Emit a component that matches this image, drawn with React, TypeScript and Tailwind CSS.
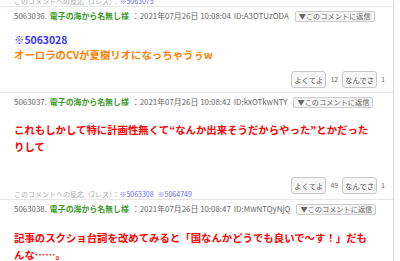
import React from "react";

type Comment = {
  no: string;
  name: string;
  date: string;
  id: string;
  lines: { text: string; color: string }[];
  bodyTop: string;
  leading: string;
  voteTop?: string;
  good?: number;
  bad?: number;
  replies?: string[];
};

const comments: Comment[] = [
  {
    no: "5063036.",
    name: "電子の海から名無し様",
    date: "：2021年07月26日 10:08:04",
    id: "ID:A3OTUzODA",
    lines: [
      { text: "※5063028", color: "text-[#3333ff]" },
      { text: "オーロラのCVが夏樹リオになっちゃうぅw", color: "text-[#ff8000]" },
    ],
    bodyTop: "mt-[8px]",
    leading: "leading-[15px]",
    voteTop: "mt-[9px]",
    good: 12,
    bad: 1,
  },
  {
    no: "5063037.",
    name: "電子の海から名無し様",
    date: "：2021年07月26日 10:08:42",
    id: "ID:kxOTkwNTY",
    lines: [
      {
        text: "これもしかして特に計画性無くて“なんか出来そうだからやった”とかだったりして",
        color: "text-[#ff0000]",
      },
    ],
    bodyTop: "mt-[11px]",
    leading: "leading-[17px]",
    voteTop: "mt-[22px]",
    good: 49,
    bad: 1,
    replies: ["※5063308", "※5064749"],
  },
  {
    no: "5063038.",
    name: "電子の海から名無し様",
    date: "：2021年07月26日 10:08:47",
    id: "ID:MwNTQyNjQ",
    lines: [
      {
        text: "記事のスクショ台詞を改めてみると「国なんかどうでも良いで〜す！」だもんな……。",
        color: "text-[#ff0000]",
      },
    ],
    bodyTop: "mt-[12px]",
    leading: "leading-[17px]",
  },
];

const VoteButton = ({ label, count }: { label: string; count: number }) => (
  <div className="flex items-center">
    <span className="h-[17px] px-[2px] flex items-center border border-[#c8c8c8] rounded-[3px] bg-[#f7f7f7] text-[#555] text-[7.4px]">
      {label}
    </span>
    <span className="ml-[4px] mr-[4px] text-[#666] text-[6.8px]">{count}</span>
  </div>
);

const CommentItem = ({ c }: { c: Comment }) => (
  <div className="border-t border-[#e6e6e6] pl-[14px] pr-[4px]">
    <div className="flex items-center h-[16px] mt-[1px] text-[7.9px] text-[#666] whitespace-nowrap">
      <span>{c.no}</span>
      <span className="ml-[3px] text-[#3a9a2a] font-bold">{c.name}</span>
      <span className="ml-[3px]">{c.date}</span>
      <span className="ml-[3px]">{c.id}</span>
      <span className="ml-[6px] h-[11px] px-[3px] flex items-center border border-[#ccc] rounded-[2px] bg-[#f5f5f5] text-[#666] text-[7.2px]">
        ▼このコメントに返信
      </span>
    </div>
    <div className={`${c.bodyTop} ${c.leading} pr-[17px] text-[10.4px] font-bold`}>
      {c.lines.map((l, i) => (
        <div key={i} className={l.color}>
          {l.text}
        </div>
      ))}
    </div>
    {c.good !== undefined && (
      <div className={`flex justify-end ${c.voteTop}`}>
        <VoteButton label="よくてよ" count={c.good} />
        <VoteButton label="なんでさ" count={c.bad ?? 0} />
      </div>
    )}
    {c.replies ? (
      <div className="-mt-[5px] text-[7px] text-[#aaa] h-[10px] flex items-center whitespace-nowrap">
        このコメントへの反応（2レス）：
        {c.replies.map((r) => (
          <span key={r} className="mr-[4px] text-[#6666ff]">
            {r}
          </span>
        ))}
      </div>
    ) : (
      <div className="h-[4px]" />
    )}
  </div>
);

export default function App() {
  return (
    <div
      className="w-[400px] h-[261px] overflow-hidden bg-white"
      style={{ fontFamily: '"Noto Sans CJK JP", "Liberation Sans", sans-serif' }}
    >
      <div className="w-[394px] border-r border-[#d8d8d8] -mt-[4px]">
        <div className="pl-[14px] h-[10px] flex items-center text-[7px] text-[#aaa] whitespace-nowrap">
          このコメントへの反応（1レス）：<span className="text-[#6666ff]">※5063075</span>
        </div>
        {comments.map((c) => (
          <CommentItem key={c.no} c={c} />
        ))}
      </div>
    </div>
  );
}
